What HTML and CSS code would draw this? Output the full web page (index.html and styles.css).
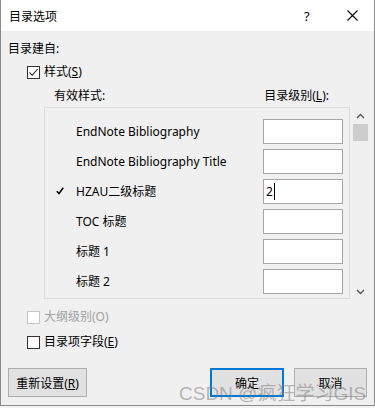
FILE: index.html
```html
<!DOCTYPE html>
<html lang="zh-CN">
<head>
  <meta charset="UTF-8" />
  <title>目录选项</title>
  <link rel="stylesheet" href="styles.css">
</head>
<body>
  <div class="dialog">
    <div class="titlebar">
      <span class="title">目录选项</span>
      <span class="help">?</span>
      <span class="close">
        <svg width="11" height="11" viewBox="0 0 11 11"><path d="M0.5 0.5 L10.5 10.5 M10.5 0.5 L0.5 10.5" stroke="#000" stroke-width="1.1" fill="none"/></svg>
      </span>
    </div>

    <div class="content">
      <div class="line">目录建自:</div>

      <div class="line check-line">
        <span class="box">
          <svg width="11" height="11" viewBox="0 0 11 11"><path d="M1.5 5.5 L4.2 8.3 L9.6 2" stroke="#222" stroke-width="1.1" fill="none"/></svg>
        </span>
        <span>样式(<u>S</u>)</span>
      </div>

      <div class="line headers">
        <span>有效样式:</span>
        <span class="level-head">目录级别(<u>L</u>):</span>
      </div>

      <div class="list-wrap">
        <div class="list">
          <div class="row">
            <span class="mark"></span>
            <span class="name">EndNote Bibliography</span>
            <span class="level"></span>
          </div>
          <div class="row">
            <span class="mark"></span>
            <span class="name">EndNote Bibliography Title</span>
            <span class="level"></span>
          </div>
          <div class="row">
            <span class="mark">
              <svg width="8" height="8" viewBox="0 0 8 8"><path d="M0.8 4.2 L3 6.6 L7.2 0.8" stroke="#000" stroke-width="1.6" fill="none"/></svg>
            </span>
            <span class="name">HZAU二级标题</span>
            <span class="level"><span class="caret">2</span></span>
          </div>
          <div class="row">
            <span class="mark"></span>
            <span class="name">TOC 标题</span>
            <span class="level"></span>
          </div>
          <div class="row">
            <span class="mark"></span>
            <span class="name">标题 1</span>
            <span class="level"></span>
          </div>
          <div class="row">
            <span class="mark"></span>
            <span class="name">标题 2</span>
            <span class="level"></span>
          </div>
        </div>
        <div class="scrollbar">
          <svg width="9" height="6" viewBox="0 0 9 6"><path d="M1 5 L4.5 1.5 L8 5" stroke="#555" stroke-width="1.4" fill="none"/></svg>
          <div class="thumb"></div>
          <div class="track"></div>
          <svg width="9" height="6" viewBox="0 0 9 6"><path d="M1 1 L4.5 4.5 L8 1" stroke="#555" stroke-width="1.4" fill="none"/></svg>
        </div>
      </div>

      <div class="line check-line outline disabled">
        <span class="box"></span>
        <span>大纲级别(O)</span>
      </div>

      <div class="line check-line entry">
        <span class="box"></span>
        <span>目录项字段(<u>E</u>)</span>
      </div>

      <div class="buttons">
        <button class="btn reset">重新设置(<u>R</u>)</button>
        <button class="btn ok">确定</button>
        <button class="btn cancel">取消</button>
      </div>
    </div>

    <div class="watermark">CSDN @疯狂学习GIS</div>
  </div>
</body>
</html>
```

FILE: styles.css
```css
body {
  margin: 0;
  background: #f4f4f4;
  font-family: "Noto Sans", "Noto Sans CJK SC", sans-serif;
  font-size: 12px;
  color: #000;
}

.dialog {
  position: relative;
  width: 375px;
  height: 406px;
  box-sizing: border-box;
  background: #f0f0f0;
  border: 1px solid #8a8a8a;
  border-top: none;
  overflow: hidden;
}

.titlebar {
  height: 31px;
  background: #fff;
  display: flex;
  align-items: center;
  padding-left: 8px;
}

.title {
  flex: 1;
  font-size: 12px;
}

.help {
  width: 14px;
  font-size: 13px;
  margin-right: 29px;
}

.close {
  display: flex;
  margin-right: 16px;
}

.content {
  padding: 9px 0 0 7px;
}

.line {
  height: 18px;
  line-height: 18px;
  display: flex;
  align-items: center;
}

.check-line {
  margin-top: 5px;
  padding-left: 19px;
}

.box {
  width: 11px;
  height: 11px;
  border: 1px solid #333;
  background: #fff;
  margin-right: 4px;
  display: flex;
}

.headers {
  margin-top: 6px;
  padding-left: 46px;
}

.level-head {
  margin-left: 159px;
}

.list-wrap {
  display: flex;
  margin-top: 2px;
  margin-left: 36px;
}

.list {
  width: 304px;
  height: 182px;
  border: 1px solid #dcdcdc;
  padding-top: 8px;
  box-sizing: content-box;
}

.row {
  display: flex;
  align-items: center;
  height: 30px;
}

.mark {
  width: 31px;
  padding-left: 11px;
  box-sizing: border-box;
  display: flex;
  align-items: center;
}

.name {
  flex: 1;
}

.level {
  width: 76px;
  height: 23px;
  border: 1px solid #a6a6a6;
  background: #fff;
  margin-right: 6px;
  line-height: 23px;
  padding-left: 2px;
  box-sizing: content-box;
}

.caret {
  border-right: 1px solid #000;
  padding-right: 1px;
}

.scrollbar {
  width: 16px;
  margin-left: 2px;
  display: flex;
  flex-direction: column;
  align-items: center;
  padding-top: 6px;
}

.thumb {
  width: 15px;
  height: 17px;
  background: #cdcdcd;
  margin-top: 5px;
}

.track {
  flex: 1;
}

.scrollbar svg:last-child {
  margin-bottom: 4px;
}

.outline {
  margin-top: 9px;
}

.disabled {
  color: #a0a0a0;
}

.disabled .box {
  border-color: #c6c6c6;
}

.entry {
  margin-top: 7px;
}

.buttons {
  display: flex;
  margin-top: 17px;
  padding-right: 7px;
}

.btn {
  height: 29px;
  font-family: "Noto Sans", "Noto Sans CJK SC", sans-serif;
  font-size: 12px;
  background: #e1e1e1;
  border: 1px solid #adadad;
  padding: 0;
  color: #000;
}

.reset {
  width: 79px;
  margin-right: auto;
}

.ok {
  width: 74px;
  border: 2px solid #0078d7;
  margin-right: 10px;
}

.cancel {
  width: 73px;
}

.watermark {
  position: absolute;
  left: 178px;
  top: 378px;
  font-family: "Liberation Sans", "Noto Sans CJK SC", sans-serif;
  font-size: 19px;
  color: rgba(120, 120, 120, 0.5);
  white-space: nowrap;
}
```
